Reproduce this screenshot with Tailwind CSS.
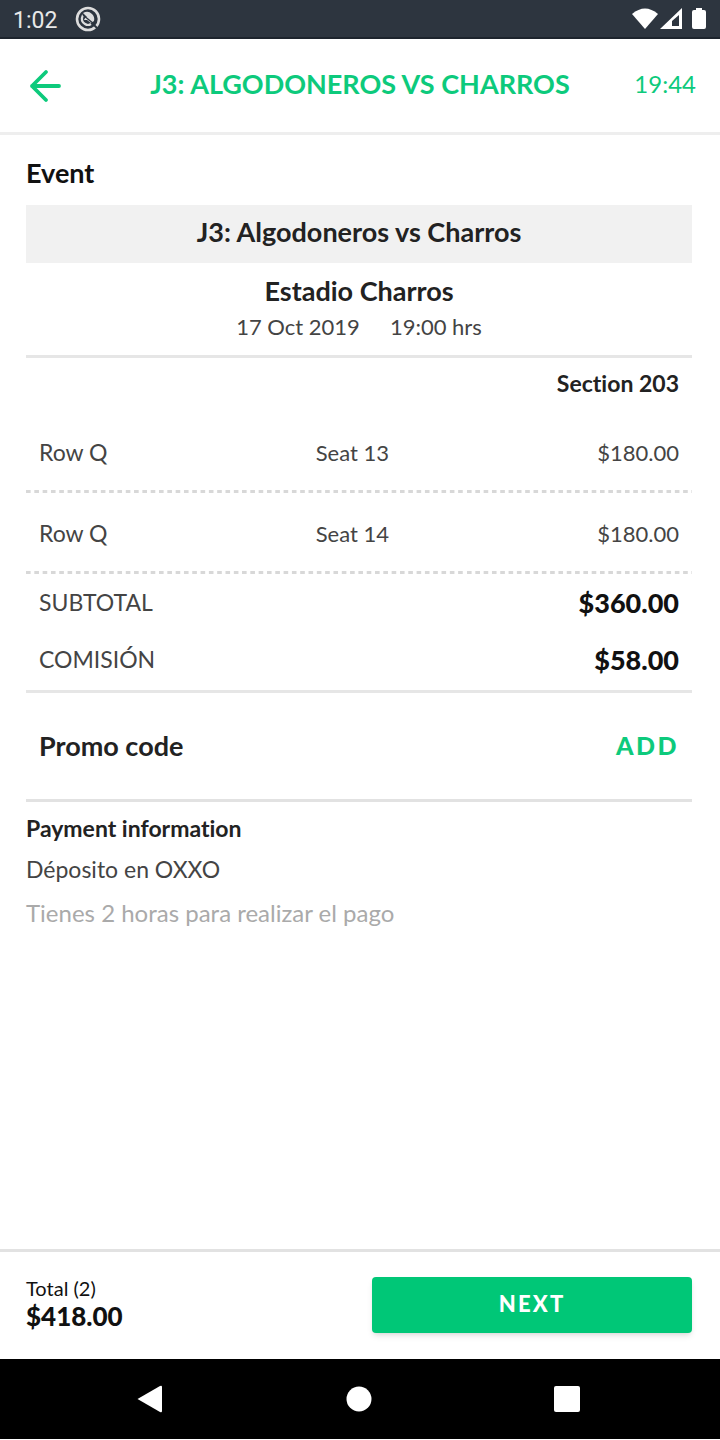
<!DOCTYPE html>
<html lang="en">
<head>
<meta charset="utf-8">
<meta name="viewport" content="width=device-width, initial-scale=1">
<title>J3: Algodoneros vs Charros</title>
<script src="https://cdn.jsdelivr.net/npm/@tailwindcss/browser@4"></script>
</head>
<body class="flex min-h-screen flex-col bg-white pb-px font-['Lato',sans-serif] text-[24px] text-[#222] [font-variant-ligatures:none]">
  <div class="flex h-[39px] items-center border-b-2 border-[#1d242d] bg-[#2d353f] pr-3 pl-[13px] text-[#e8e8e8]">
    <span class="pt-1 font-['Roboto',sans-serif] text-[23px] leading-6">1:02</span>
    <svg class="ml-[18px] size-[26px]" viewBox="0 0 26 26" fill="none" stroke="#ddd" aria-hidden="true">
      <circle cx="13" cy="13" r="11" stroke-width="2.600"/>
      <path d="M8 9Q5 15 10 18Q13 20 16 18" stroke-width="2.200"/>
      <path d="M8 7Q13 4 17 8Q20 11 19 15L16 17L12 14L9 14Q10 11 12 11z" fill="#ddd" stroke="none"/>
      <path d="M8 9l11 9" stroke="#2d353f" stroke-width="1.300"/>
      <path d="M18 18l4 4" stroke="#2d353f" stroke-width="2"/>
    </svg>
    <svg class="ml-auto h-[26px] w-[76px]" viewBox="0 0 76 26" fill="#fff" aria-hidden="true">
      <path d="M0 8Q13-3 26 8L13 23z"/>
      <path fill-rule="evenodd" d="M28 23L50 2V23zM40 20H47V9L40 15z"/>
      <path d="M64 4V2h6v2h2q2 0 2 2v15q0 2-2 2H62q-2 0-2-2V6q0-2 2-2z"/>
    </svg>
  </div>

  <header class="grid h-[96px] grid-cols-[100px_1fr_100px] items-center border-b-3 border-[#eee] px-6 text-[#0dca7c]">
    <button type="button" aria-label="Back" class="size-10">
      <svg class="size-10" viewBox="0 0 40 40" fill="none" stroke="currentColor" stroke-width="3.800" stroke-linecap="round" stroke-linejoin="round">
        <path d="M35 20H8M22 6L8 20l14 14"/>
      </svg>
    </button>
    <h1 class="pb-1 text-center text-[27px] leading-8 font-bold whitespace-nowrap">J3: ALGODONEROS VS CHARROS</h1>
    <time class="pb-1 text-right">19:44</time>
  </header>

  <main class="flex-1 pt-[22px] pr-7 pl-[26px]">
    <h2 class="h-12 text-[27px] leading-8 font-bold text-[#111]">Event</h2>
    <p class="bg-[#f1f1f1] pb-1 text-center text-[27px] leading-[54px] font-bold">J3: Algodoneros vs Charros</p>
    <div class="border-b-3 border-[#e6e6e6] pt-[10px] pb-[12px] text-center">
      <p class="text-[27px] leading-9 font-bold">Estadio Charros</p>
      <p class="flex justify-center gap-[30px] pt-[2px] text-[22px] leading-8 text-[#444]"><span>17 Oct 2019</span><span>19:00 hrs</span></p>
    </div>

    <table class="w-full table-fixed text-[22px] text-[#444]">
      <colgroup><col class="w-[32%]"><col><col class="w-[34%]"></colgroup>
      <thead>
        <tr class="h-[54px] text-[#222]"><th colspan="3" scope="colgroup" class="px-[13px] pb-1 text-right text-[23px] font-bold">Section 203</th></tr>
      </thead>
      <tbody>
        <tr class="h-[81px] bg-[linear-gradient(to_right,#d8d8d8_60%,transparent_60%)] bg-[length:1.25%_3px] bg-bottom-left bg-repeat-x">
          <td class="px-[13px] text-[23px]">Row Q</td><td class="text-center">Seat 13</td><td class="px-[13px] text-right">$180.00</td>
        </tr>
        <tr class="h-[81px] bg-[linear-gradient(to_right,#d8d8d8_60%,transparent_60%)] bg-[length:1.25%_3px] bg-bottom-left bg-repeat-x">
          <td class="px-[13px] text-[23px]">Row Q</td><td class="text-center">Seat 14</td><td class="px-[13px] text-right">$180.00</td>
        </tr>
      </tbody>
    </table>

    <dl class="border-b-3 border-[#e6e6e6] px-[13px] pb-[2px] leading-[57px]">
      <div class="flex justify-between"><dt class="text-[23px] text-[#444]">SUBTOTAL</dt><dd class="text-[27px] font-black text-[#111]">$360.00</dd></div>
      <div class="flex justify-between"><dt class="text-[23px] text-[#444]">COMISIÓN</dt><dd class="text-[27px] font-black text-[#111]">$58.00</dd></div>
    </dl>

    <div class="flex h-[109px] items-center justify-between border-b-3 border-[#e2e2e2] px-[13px] text-[27px] font-bold">
      <span>Promo code</span>
      <button type="button" class="text-[25px] font-black tracking-widest text-[#0dca7c]">ADD</button>
    </div>

    <section class="pt-[6px]">
      <h2 class="text-[23px] leading-10 font-bold">Payment information</h2>
      <p class="text-[23px] leading-[42px] text-[#444]">Déposito en OXXO</p>
      <p class="leading-[46px] text-[#aaa]">Tienes 2 horas para realizar el pago</p>
    </section>
  </main>

  <footer class="flex h-[110px] items-center justify-between border-t-3 border-[#e2e2e2] pr-7 pb-[2px] pl-[26px] text-[#111]">
    <p class="flex flex-col pb-[2px]"><span class="text-[20px] leading-6">Total (2)</span><strong class="text-[26px] leading-8 font-black">$418.00</strong></p>
    <button type="button" class="h-14 w-12/25 rounded bg-[#00c777] pb-[2px] text-[22px] font-black tracking-widest text-white shadow-md">NEXT</button>
  </footer>

  <nav class="flex h-20 items-center justify-center gap-[168px] bg-black pr-[2px] text-white">
    <button type="button" aria-label="Back"><svg class="size-10" viewBox="0 0 40 40" fill="currentColor"><path d="M6.500 20L29 7q2-1 2 1v24q0 2-2 1z"/></svg></button>
    <button type="button" aria-label="Home"><svg class="size-10" viewBox="0 0 40 40" fill="currentColor"><circle cx="20" cy="20" r="12.500"/></svg></button>
    <button type="button" aria-label="Recent apps"><svg class="size-10" viewBox="0 0 40 40" fill="currentColor"><rect x="7" y="7" width="26" height="26" rx="2"/></svg></button>
  </nav>
</body>
</html>
